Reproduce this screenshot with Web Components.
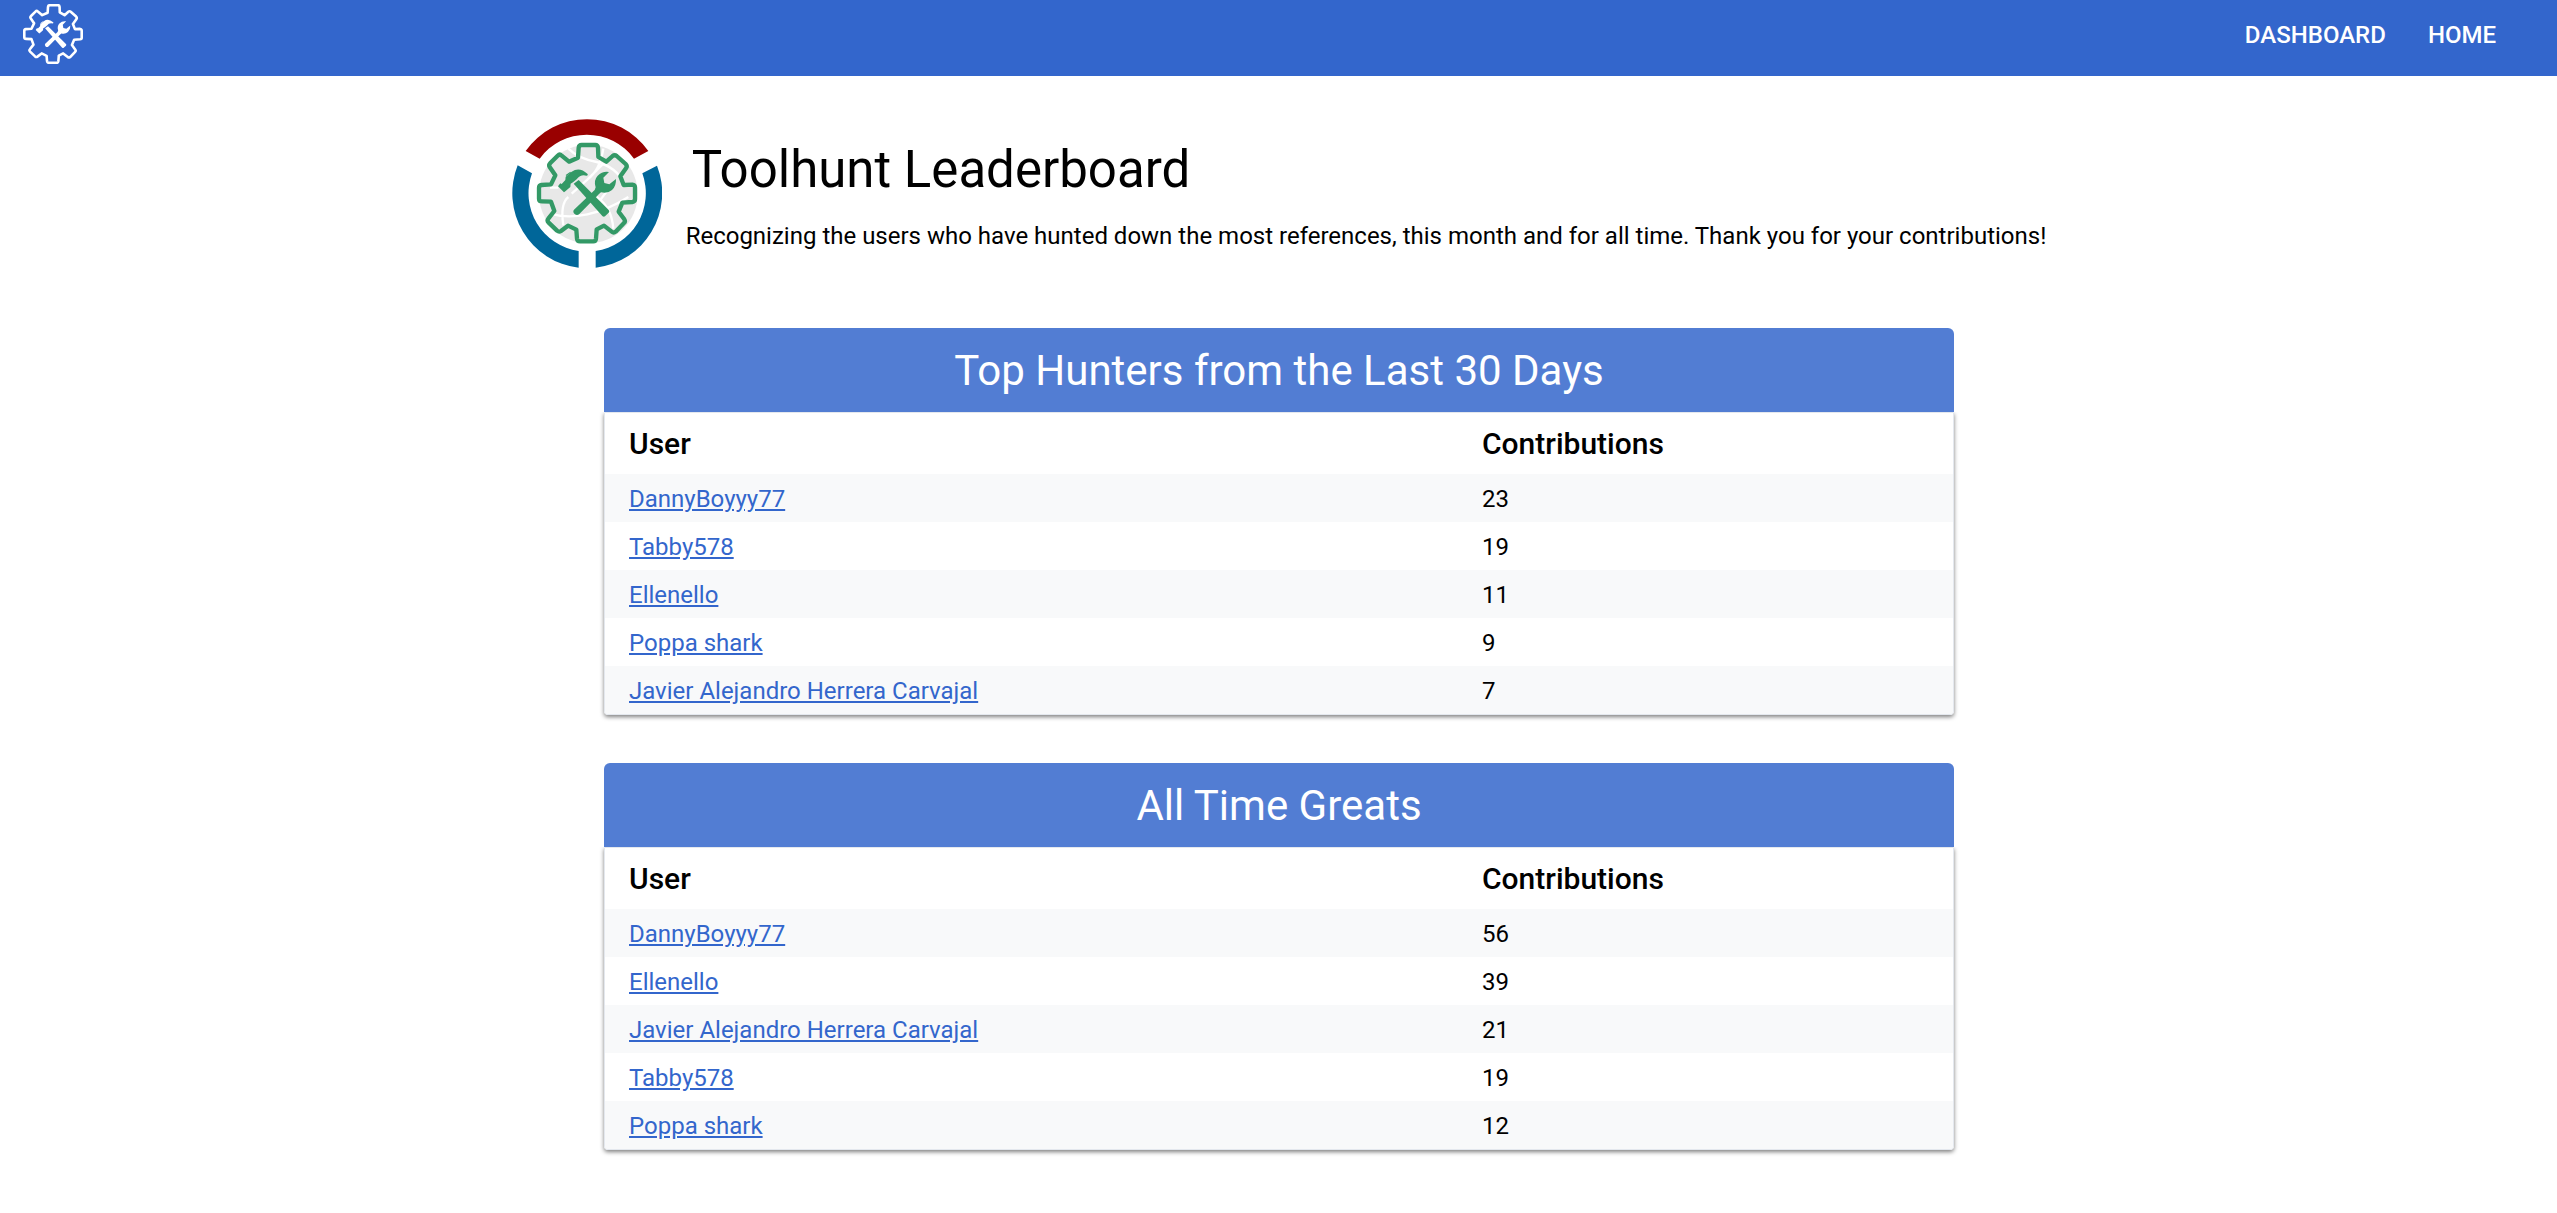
<!DOCTYPE html>
<html lang="en">
<head>
<meta charset="utf-8">
<meta name="viewport" content="width=device-width, initial-scale=1">
<title>Toolhunt Leaderboard</title>
<style>
body { margin: 0; background: #fff; color: #000; font: 24px/32px Roboto, "Liberation Sans", sans-serif; }
main { display: flex; flex-direction: column; align-items: center; gap: 48px; padding: 40px 24px 48px 25px; }
</style>
</head>
<body>
<site-nav>
  <nav-link href="#dashboard">DASHBOARD</nav-link>
  <nav-link href="#home">HOME</nav-link>
</site-nav>
<main>
  <page-intro>
    <span slot="title">Toolhunt Leaderboard</span>
    Recognizing the users who have hunted down the most references, this month and for all time. Thank you for your contributions!
  </page-intro>
  <leader-board rows="DannyBoyyy77:23|Tabby578:19|Ellenello:11|Poppa shark:9|Javier Alejandro Herrera Carvajal:7">Top Hunters from the Last 30 Days</leader-board>
  <leader-board rows="DannyBoyyy77:56|Ellenello:39|Javier Alejandro Herrera Carvajal:21|Tabby578:19|Poppa shark:12">All Time Greats</leader-board>
</main>
<script>
const define = (name, html, setup) => customElements.define(name, class extends HTMLElement {
  connectedCallback() {
    if (this.shadowRoot) return;
    this.attachShadow({ mode: 'open' }).innerHTML = html;
    if (setup) setup(this, this.shadowRoot);
  }
});

const gear = `
<path fill="none" stroke="currentColor" stroke-width="13" stroke-linejoin="round" d="M234 172L236 142Q237 134 245 134H286Q293 134 294 142L295 170L319 184L338 167Q344 162 350 167L377 191Q383 197 378 204L361 228L371 254L397 253Q405 254 405 261V297Q405 304 397 305L367 307L356 334L373 357Q377 363 372 368L347 394Q341 399 335 394L312 376L290 387L288 415Q287 423 280 423H240Q232 423 231 415L229 388L204 376L183 392Q177 396 171 391L146 367Q140 361 145 355L163 332L153 304L126 303Q117 303 117 295V262Q117 255 125 254L153 252L166 225L149 200Q145 194 151 188L173 166Q179 160 185 166L207 184Z"/>
<g fill="currentColor">
<path d="M174 258L181 249L185 251L196 239L197 229L215 214Q238 198 262 220Q266 225 259 226Q242 221 230 237L219 246L212 250L211 260L197 272L192 276Z"/>
<path d="M197 224L211 214L213 217L199 227Z"/>
<path d="M221 250L236 239L326 329Q330 333 326 337L315 348Q311 351 307 347Z"/>
<path d="M222 328L284 269L287 261Q280 240 293 226Q307 212 327 215L310 232L313 248L328 252L348 236Q349 257 336 269Q322 281 303 276L297 281L238 341Q231 347 224 341Q217 334 222 328Z"/>
</g>`;

define('gear-logo', `
<style>:host{display:block;width:60px;height:60px;color:#fff}svg{display:block;width:100%;height:100%}</style>
<svg viewBox="111 128 300 301" aria-hidden="true">${gear}</svg>`);

define('community-logo', `
<style>:host{display:block;flex:none;width:150px;height:150px;color:#396}svg{display:block;width:100%;height:100%}</style>
<svg viewBox="36 53 450 450" role="img" aria-label="Toolhunt">
<circle cx="265" cy="281" r="148" fill="#e8e8e8"/>
<g fill="none" stroke="#fff" stroke-width="7"><path d="M205 145Q235 175 290 185Q350 200 372 250M310 145Q300 210 262 238L215 280M150 262H175M310 190L262 238M150 340Q200 355 262 342T385 290M205 290Q180 310 190 375M290 290Q335 320 340 385M330 260L300 300"/></g>
<path fill="#900" d="M77 152A225 225 0 0 1 445 152L402 175A175 175 0 0 0 119 175Z"/>
<path fill="#069" d="M53 195A225 225 0 0 0 236 502V452A175 175 0 0 1 96 219ZM471 196A225 225 0 0 1 287 502V452A175 175 0 0 0 427 219Z"/>
${gear}
</svg>`);

define('nav-link', `
<style>:host{display:block}a{color:#fff;font-weight:500;text-decoration:none}</style>
<a><slot></slot></a>`, (host, root) => { root.querySelector('a').href = host.getAttribute('href'); });

define('site-nav', `
<style>
:host{display:block;background:#36c}
header{display:flex;align-items:center;justify-content:space-between;height:68px;padding:0 61px 8px 23px}
nav{display:flex;gap:42px;padding-top:2px}
a{display:block}
</style>
<header><a href="#home" aria-label="Toolhunt home"><gear-logo></gear-logo></a><nav><slot></slot></nav></header>`);

define('page-intro', `
<style>
:host{display:flex;align-items:flex-start;gap:24px;padding:2px 0 12px}
h1{margin:16px 0 0 6px;font-size:51px;line-height:72px;font-weight:400}
p{margin:14px 0 0}
</style>
<community-logo></community-logo>
<div><h1><slot name="title"></slot></h1><p><slot></slot></p></div>`);

define('leader-board', `
<style>
:host{display:block;width:100%;max-width:1350px}
h2{margin:0;padding-top:2px;background:#527dd3;color:#fff;font-size:42px;line-height:82px;font-weight:400;text-align:center;border-radius:6px 6px 0 0}
.card{border:1px solid #e4e8ee;border-radius:0 0 4px 4px;box-shadow:0 2px 4px rgba(0,0,0,.5);overflow:hidden;clip-path:inset(0 -12px -12px)}
table{width:100%;border-collapse:collapse;table-layout:fixed}
th,td{padding:8px 24px;text-align:left}
td{padding:9px 24px 7px}
th{font-size:30px;line-height:45px;font-weight:500}
th:first-child{width:805px}
tbody tr:nth-child(odd){background:#f8f9fa}
a{color:#36c;text-decoration:underline}
</style>
<h2 id="title"><slot></slot></h2>
<div class="card"><table aria-labelledby="title">
<thead><tr><th scope="col">User</th><th scope="col">Contributions</th></tr></thead><tbody></tbody>
</table></div>`, (host, root) => {
  const body = root.querySelector('tbody');
  for (const row of host.getAttribute('rows').split('|')) {
    const [user, count] = row.split(':');
    const tr = body.insertRow();
    const link = document.createElement('a');
    link.href = '#' + encodeURIComponent(user);
    link.textContent = user;
    tr.insertCell().append(link);
    tr.insertCell().textContent = count;
  }
});
</script>
</body>
</html>
